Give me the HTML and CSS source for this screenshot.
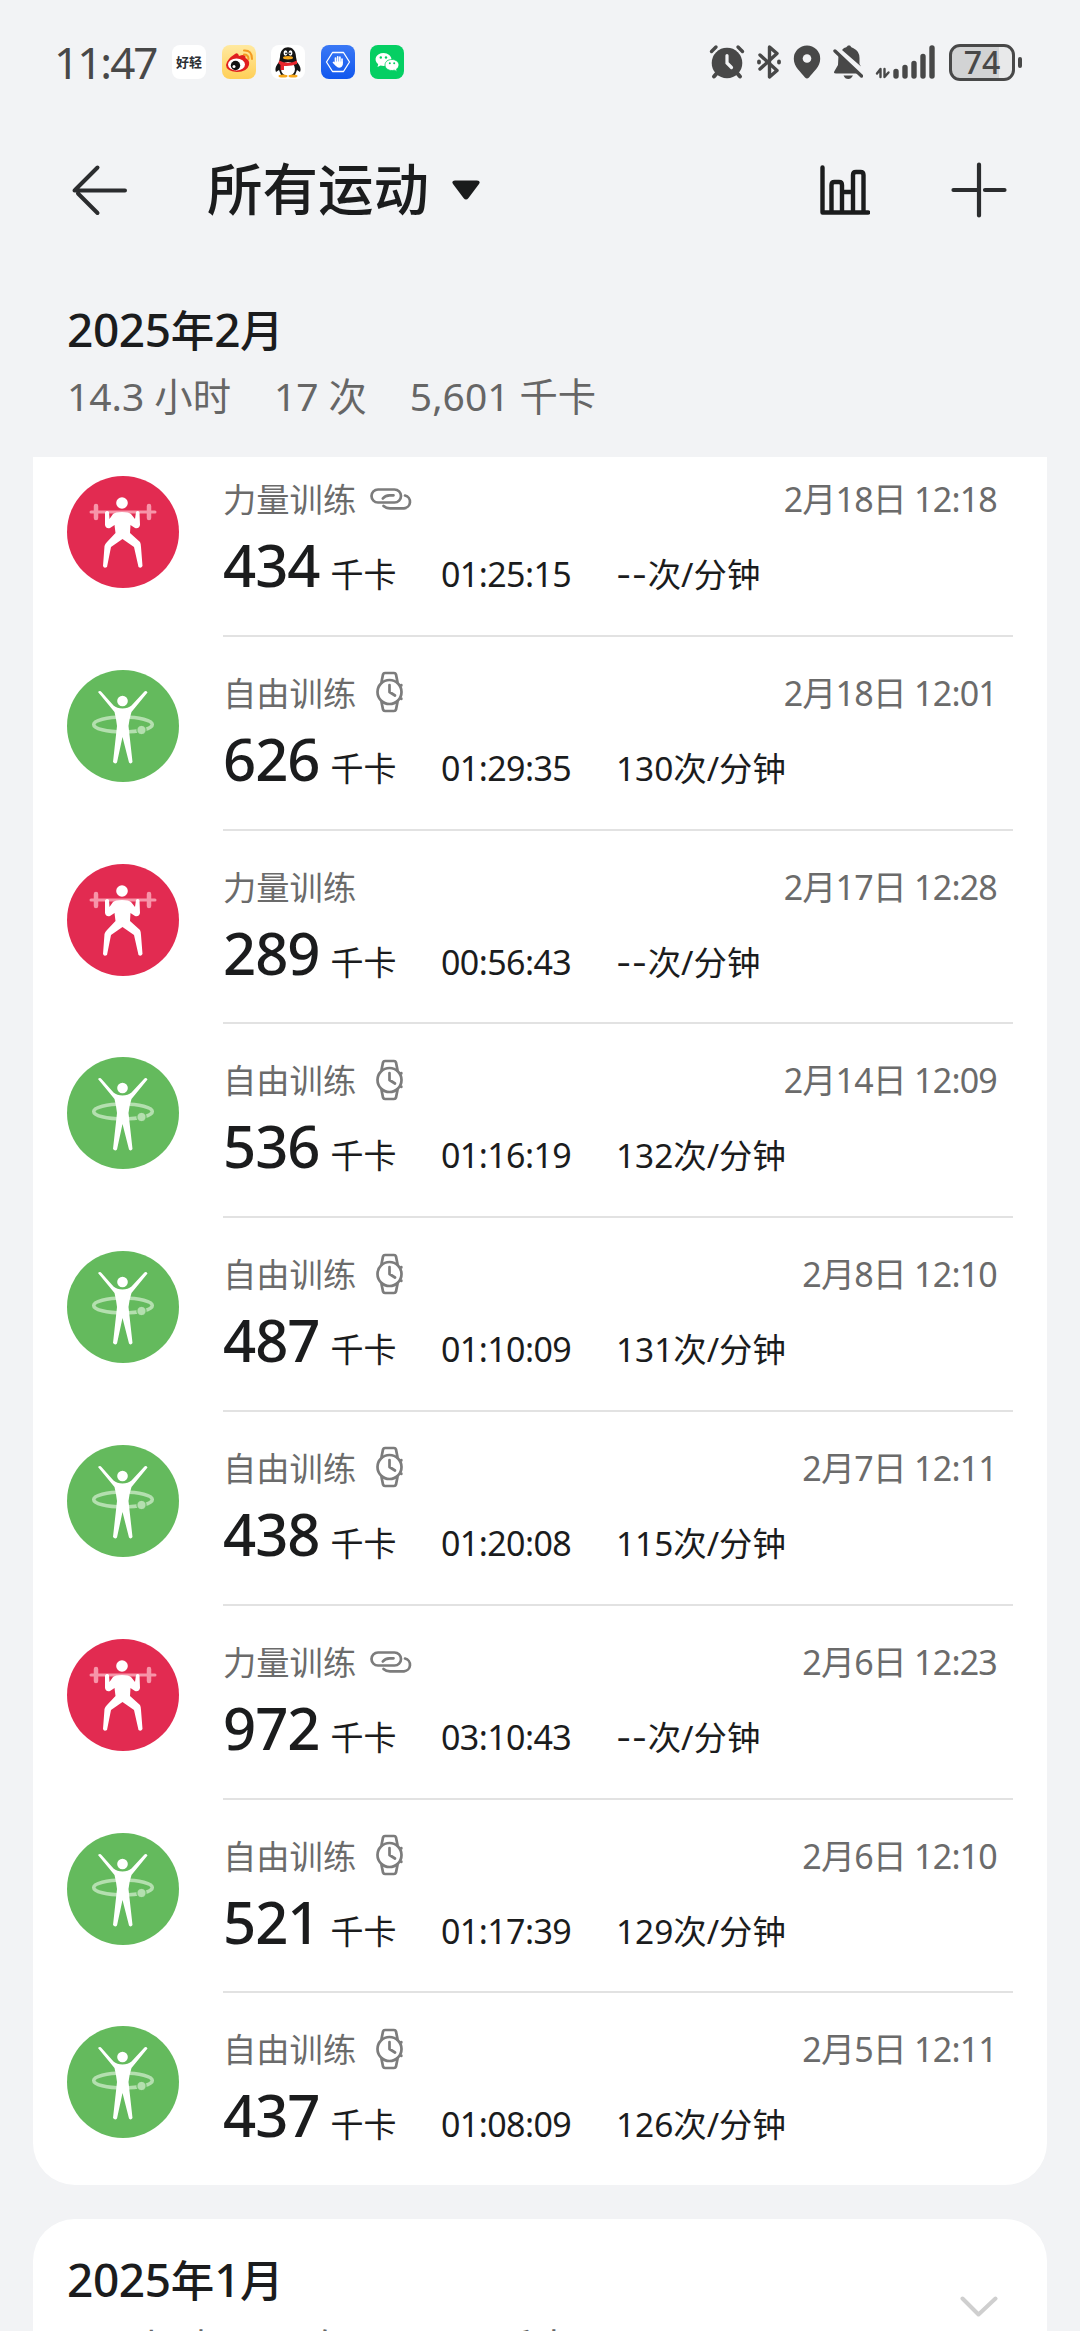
FILE: index.html
```html
<!DOCTYPE html>
<html lang="zh-CN">
<head>
<meta charset="utf-8">
<title>所有运动</title>
<link rel="stylesheet" href="styles.css">
</head>
<body>
<svg class="defs" aria-hidden="true">
  <symbol id="lift" viewBox="0 0 112 112">
    <circle cx="56" cy="56" r="56" fill="#e22b51"/>
    <g stroke="#f795a9" stroke-linecap="round" fill="none">
      <path d="M24 36H88" stroke-width="3"/>
      <path d="M29 30V42M82 30V42" stroke-width="4.5"/>
    </g>
    <circle cx="55" cy="27" r="5.8" fill="#fff"/>
    <path d="M38 36.500Q40 34 42 36L42.500 43L46 38Q48 36 55 36Q62 36 64 38L68 43L69 36Q71 34 72.500 36.500L73 49Q72 53 68 52L63.500 49L63 57L73 66Q74 68 74 71L75.500 90Q74 93 71.500 91L67 71L55.500 63L44 71L40 91Q37 93 36 90L37.500 70Q38 68 40 66L48.500 57L47.500 49L43 52Q39 53 38 49Z" fill="#fff"/>
  </symbol>
  <symbol id="free" viewBox="0 0 112 112">
    <circle cx="56" cy="56" r="56" fill="#64ba5d"/>
    <ellipse cx="56" cy="54.500" rx="29.300" ry="7.500" fill="none" stroke="#b4dfaf" stroke-width="3.600"/>
    <circle cx="74.500" cy="60" r="4.600" fill="#b4dfaf" stroke="#64ba5d" stroke-width="1"/>
    <circle cx="55.500" cy="31" r="5.300" fill="#fff"/>
    <path d="M31 22Q33 20 34.500 22L46.500 35.500Q50 38.500 55.500 38.500Q61 38.500 64.500 35.500L77 22Q79 20 80.500 22.500L64.500 42Q62.500 48 61.500 56L65.500 92Q64 94.500 62 92.500L55.500 67L50 92.500Q48 94.500 46 92L50 56Q49 48 47.500 42Z" fill="#fff"/>
  </symbol>
  <symbol id="link" viewBox="0 0 42 22">
    <g fill="none" stroke="#7c7c7c" stroke-width="2.700" stroke-linecap="round">
      <rect x="1.500" y="1.500" width="29.500" height="13" rx="6.500"/>
      <path d="M23.500 7.300H19.500Q15 7.500 12.800 10.500M13.500 18Q16 20.300 20 20.300H34A6.500 6.500 0 0 0 35 7.500"/>
    </g>
  </symbol>
  <symbol id="watch" viewBox="0 0 28 42">
    <g fill="none" stroke="#7c7c7c" stroke-width="2.700" stroke-linecap="round" stroke-linejoin="round">
      <circle cx="13.500" cy="21" r="12"/>
      <path d="M5.500 11L7 3.500Q7.500 2 9 2H18Q19.500 2 20 3.500L21.500 11M5.500 31L7 38.500Q7.500 40 9 40H18Q19.500 40 20 38.500L21.500 31M13.500 14V21L19 24.500M25.300 14V14.500M25.300 27.500V28"/>
    </g>
  </symbol>
</svg>

<div class="status">
  <span class="clock">11:47</span>
  <div class="apps">
    <span class="app haoqing"><i>好轻</i></span>
    <svg class="app" viewBox="0 0 34 34">
      <defs><linearGradient id="wb" x1="0" y1="0" x2="0" y2="1"><stop offset="0" stop-color="#ffe9a0"/><stop offset="1" stop-color="#ffcf57"/></linearGradient></defs>
      <rect width="34" height="34" rx="8" fill="url(#wb)"/>
      <path d="M13 9Q16 7 17 11Q24 8 23.500 13Q28 15 27 20Q25 27 15 27Q4 26 4 20Q5 14 13 9Z" fill="#e01e1e"/>
      <ellipse cx="14.500" cy="19.500" rx="8.500" ry="6" fill="#fff"/>
      <circle cx="13.500" cy="20.500" r="4.700" fill="#111"/><circle cx="12" cy="21.500" r="1.500" fill="#fff"/>
      <path d="M22 5.500Q30 5 30 14M22 9.500Q26.500 9.500 26.500 14" fill="none" stroke="#f39a22" stroke-width="2" stroke-linecap="round"/>
    </svg>
    <svg class="app" viewBox="0 0 34 34">
      <rect width="34" height="34" rx="8" fill="#fff"/>
      <path d="M9 12C9 -1 25 -1 25 12L26 17Q31 23 29 27L26 25L24 30H10L8 25L5 27Q3 23 8 17Z" fill="#151515"/>
      <ellipse cx="17" cy="24" rx="7" ry="7" fill="#fff"/>
      <path d="M8 15.500Q17 20 26 15.500V19Q20 21.500 13 21V25H9.500V20L7.500 18.500Z" fill="#e8252c"/>
      <ellipse cx="14.500" cy="8" rx="1.900" ry="2.700" fill="#fff"/><ellipse cx="19.500" cy="8" rx="1.900" ry="2.700" fill="#fff"/>
      <circle cx="15" cy="8.300" r=".9" fill="#111"/><circle cx="19" cy="8.300" r=".9" fill="#111"/>
      <ellipse cx="17" cy="12.800" rx="5" ry="1.700" fill="#f7a81b"/>
      <ellipse cx="12" cy="31" rx="4.500" ry="1.500" fill="#f7a81b"/><ellipse cx="22" cy="31" rx="4.500" ry="1.500" fill="#f7a81b"/>
    </svg>
    <svg class="app" viewBox="0 0 34 34">
      <defs><linearGradient id="bl" x1="0" y1="0" x2="0" y2="1"><stop offset="0" stop-color="#3a78f5"/><stop offset="1" stop-color="#1157ee"/></linearGradient></defs>
      <rect width="34" height="34" rx="8" fill="url(#bl)"/>
      <path d="M11.500 7.500H22.500L28.500 17L22.500 26.500H11.500L5.500 17Z" fill="none" stroke="#fff" stroke-width="1.300" stroke-linejoin="round"/>
      <path d="M14.500 18V13M16.700 17V11.800M18.900 17V12.200M21 18V14M12.500 17.500L15 20" stroke="#fff" stroke-width="1.700" stroke-linecap="round"/>
      <path d="M13.700 16.500H21.800V19.500Q21 22.800 18 22.800Q15.500 22.500 13.700 19Z" fill="#fff"/>
    </svg>
    <svg class="app" viewBox="0 0 34 34">
      <rect width="34" height="34" rx="8" fill="#05cf63"/>
      <path d="M13.500 8C18 8 21.500 11 21.500 14.500S18 21 13.500 21L10.500 20.500L7.500 22L8.200 19.300C3 15 6 8 13.500 8Z" fill="#fff"/>
      <path d="M22 14.500C26 14.500 29 17 29 20Q29 22.500 26.500 24.200L27 26.500L24.300 25.200C19 26.500 15 23.500 15 20S18 14.500 22 14.500Z" fill="#fff" stroke="#05cf63" stroke-width=".8"/>
      <g fill="#05cf63"><circle cx="10.800" cy="12.500" r="1.200"/><circle cx="16" cy="12.500" r="1.200"/><circle cx="19.800" cy="18.300" r="1"/><circle cx="24.200" cy="18.300" r="1"/></g>
    </svg>
  </div>
  <div class="system">
    <svg width="36" height="36" viewBox="0 0 36 36" fill="none" stroke="#484848" stroke-linecap="round">
      <circle cx="18" cy="19" r="15.300" fill="#484848" stroke="none"/>
      <path d="M2.500 7.500L7 3M33.500 7.500L29 3" stroke-width="3.400"/><path d="M8 29L5 32.500M28 29L31 32.500" stroke-width="4"/>
      <path d="M18 11.500V19L22.500 23.500" stroke="#f2f3f5" stroke-width="3.200"/>
    </svg>
    <svg width="24" height="36" viewBox="0 0 24 36" fill="none" stroke="#484848" stroke-width="3.400" stroke-linejoin="round" stroke-linecap="round">
      <path d="M3 11L20 26.500L12.500 33V3L20 9.500L3 25"/><path d="M2 17.500V18.500M22 17.500V18.500" stroke-width="3.800"/>
    </svg>
    <svg width="28" height="36" viewBox="0 0 28 36"><path d="M14 1.500A13.200 13.200 0 0 0 .8 14.700C.8 23 8 28 12 33.500Q14 35.500 16 33.500C20 28 27.200 23 27.200 14.700A13.200 13.200 0 0 0 14 1.500Z" fill="#484848"/><circle cx="14" cy="14.500" r="4.300" fill="#f2f3f5"/></svg>
    <svg width="30" height="36" viewBox="0 0 30 36">
      <path d="M11 4Q13.500 3.500 15 1.500H17Q18 3.500 20.500 4.200Q26.500 7 26.500 14V20L28 22.500L9 6Z" fill="#484848"/>
      <path d="M5.500 11L25 29.500H3Q0 29.500 1.500 27L5 21Z" fill="#484848"/>
      <path d="M2 7L28.500 32" stroke="#484848" stroke-width="3.400" stroke-linecap="round"/>
      <path d="M10.500 31.500H20Q18 35 15.300 35Q12 35 10.500 31.500Z" fill="#484848"/>
    </svg>
    <svg width="62" height="36" viewBox="0 0 62 36" fill="none" stroke="#484848" stroke-linecap="round">
      <path d="M5.500 33V25L2 29.500M9.500 25V33L13.500 28.500" stroke-width="2.400" stroke-linejoin="round"/>
      <path d="M21 27.500V32M30 23.500V32M39 19.500V32M48 12.500V32M57 4V32" stroke-width="5.400"/>
    </svg>
    <div class="battery"><span>74</span></div>
  </div>
</div>

<header class="bar">
  <svg class="back" width="56" height="52" viewBox="0 0 56 52" fill="none" stroke="#2b2c2e" stroke-width="4" stroke-linecap="round"><path d="M2.500 26.500H53M3 26L25.500 3.500M6 29.500L25.500 49"/></svg>
  <h1>所有运动</h1>
  <svg class="caret" width="28" height="20" viewBox="0 0 28 20"><path d="M3 .5H25Q29 1 27 4L16.500 18Q14 21 11.500 18L1 4Q-1 1 3 .5Z" fill="#1a1b1c"/></svg>
  <svg class="chart" width="50" height="50" viewBox="0 0 50 50" fill="none" stroke="#1b1c1d" stroke-width="4.400" stroke-linecap="round" stroke-linejoin="round"><path d="M2.500 2.500V47.500H48M11.500 47V20Q11.500 17 14.500 17H19Q22 17 22 20V47M22 27H33M33 47V10Q33 7 36 7H40.500Q43.500 7 43.500 10V47"/></svg>
  <svg class="plus" width="56" height="56" viewBox="0 0 56 56" fill="none" stroke="#2b2c2e" stroke-width="4.200" stroke-linecap="round"><path d="M28 2.500V53.500M2.500 28H28M34 28H53.500"/></svg>
</header>

<section class="month">
  <h2><b>2025</b>年<b>2</b>月</h2>
  <p class="stats"><span><b>14.3</b> 小时</span><span><b>17</b> 次</span><span><b>5,601</b> 千卡</span></p>
</section>

<main class="card list">
  <article class="row"><svg class="sport"><use href="#lift"/></svg><div class="body"><div class="top"><span class="name">力量训练</span><svg class="link"><use href="#link"/></svg><time>2月18日 12:18</time></div><div class="data"><span class="kcal"><b>434</b>千卡</span><span class="dur">01:25:15</span><span class="rate"><i>--</i>次/分钟</span></div></div></article>
  <article class="row"><svg class="sport"><use href="#free"/></svg><div class="body"><div class="top"><span class="name">自由训练</span><svg class="watch"><use href="#watch"/></svg><time>2月18日 12:01</time></div><div class="data"><span class="kcal"><b>626</b>千卡</span><span class="dur">01:29:35</span><span class="rate">130次/分钟</span></div></div></article>
  <article class="row"><svg class="sport"><use href="#lift"/></svg><div class="body"><div class="top"><span class="name">力量训练</span><time>2月17日 12:28</time></div><div class="data"><span class="kcal"><b>289</b>千卡</span><span class="dur">00:56:43</span><span class="rate"><i>--</i>次/分钟</span></div></div></article>
  <article class="row"><svg class="sport"><use href="#free"/></svg><div class="body"><div class="top"><span class="name">自由训练</span><svg class="watch"><use href="#watch"/></svg><time>2月14日 12:09</time></div><div class="data"><span class="kcal"><b>536</b>千卡</span><span class="dur">01:16:19</span><span class="rate">132次/分钟</span></div></div></article>
  <article class="row"><svg class="sport"><use href="#free"/></svg><div class="body"><div class="top"><span class="name">自由训练</span><svg class="watch"><use href="#watch"/></svg><time>2月8日 12:10</time></div><div class="data"><span class="kcal"><b>487</b>千卡</span><span class="dur">01:10:09</span><span class="rate">131次/分钟</span></div></div></article>
  <article class="row"><svg class="sport"><use href="#free"/></svg><div class="body"><div class="top"><span class="name">自由训练</span><svg class="watch"><use href="#watch"/></svg><time>2月7日 12:11</time></div><div class="data"><span class="kcal"><b>438</b>千卡</span><span class="dur">01:20:08</span><span class="rate">115次/分钟</span></div></div></article>
  <article class="row"><svg class="sport"><use href="#lift"/></svg><div class="body"><div class="top"><span class="name">力量训练</span><svg class="link"><use href="#link"/></svg><time>2月6日 12:23</time></div><div class="data"><span class="kcal"><b>972</b>千卡</span><span class="dur">03:10:43</span><span class="rate"><i>--</i>次/分钟</span></div></div></article>
  <article class="row"><svg class="sport"><use href="#free"/></svg><div class="body"><div class="top"><span class="name">自由训练</span><svg class="watch"><use href="#watch"/></svg><time>2月6日 12:10</time></div><div class="data"><span class="kcal"><b>521</b>千卡</span><span class="dur">01:17:39</span><span class="rate">129次/分钟</span></div></div></article>
  <article class="row"><svg class="sport"><use href="#free"/></svg><div class="body"><div class="top"><span class="name">自由训练</span><svg class="watch"><use href="#watch"/></svg><time>2月5日 12:11</time></div><div class="data"><span class="kcal"><b>437</b>千卡</span><span class="dur">01:08:09</span><span class="rate">126次/分钟</span></div></div></article>
</main>

<section class="card next">
  <div>
    <h2><b>2025</b>年<b>1</b>月</h2>
    <p class="stats"><span><b>9.3</b> 小时</span><span><b>12</b> 次</span><span><b>3,601</b> 千卡</span></p>
  </div>
  <svg class="chevron" width="38" height="22" viewBox="0 0 38 22" fill="none" stroke="#cfcfcf" stroke-width="4" stroke-linecap="round" stroke-linejoin="round"><path d="M2.500 2.500L18.500 18.500L35.500 2.500"/></svg>
</section>
</body>
</html>
```
FILE: styles.css
```css
* { box-sizing: border-box; }
html, body { height: 2331px; overflow: hidden; }
body {
  margin: 0;
  width: 1080px;
  display: flex;
  flex-direction: column;
  background: #f2f3f5;
  color: #1b1c1d;
  font-family: "Noto Sans", "Noto Sans CJK SC", sans-serif;
  white-space: nowrap;
}
h1, h2, p { margin: 0; }
i { font-style: normal; }
svg { display: block; flex: none; }
.defs { position: absolute; width: 0; height: 0; }

.status {
  height: 124px;
  padding: 0 56px 0 54px;
  display: flex;
  align-items: center;
}
.clock {
  width: 118px;
  font-size: 44px;
  line-height: 60px;
  letter-spacing: -2px;
  color: #484848;
}
.apps { display: flex; gap: 15.500px; }
.app { width: 34px; height: 34px; }
.haoqing {
  border-radius: 8px;
  background: #fff;
  display: flex;
  align-items: center;
  justify-content: center;
}
.haoqing i {
  font-size: 13px;
  line-height: 34px;
  font-weight: 700;
  font-family: "Noto Sans CJK SC", sans-serif;
  color: #2c3034;
}
.system { margin-left: auto; display: flex; align-items: center; gap: 12px; }
.battery {
  position: relative;
  width: 66px;
  height: 37px;
  margin-right: 9px;
  border: 3px solid #484848;
  border-radius: 11px;
  background: linear-gradient(90deg, #d2d3d4 78%, #e8e9ea 78%);
  color: #484848;
  text-align: center;
}
.battery span { display: block; font-size: 32px; line-height: 30px; font-weight: 500; }
.battery::after {
  content: "";
  position: absolute;
  right: -10px;
  top: 10px;
  width: 4px;
  height: 11px;
  border-radius: 2px;
  background: #484848;
}

.bar {
  height: 132px;
  padding: 0 73px 0 72px;
  display: flex;
  align-items: center;
}
.bar h1 {
  margin: -3px 0 0 79px;
  font-size: 55.500px;
  line-height: 72px;
  font-weight: 500;
}
.caret { margin-left: 23px; }
.chart { margin-left: auto; }
.plus { margin-left: 81px; }

.month { height: 201px; padding: 43px 67px 0; }
h2 { font-size: 43.500px; line-height: 60px; font-weight: 500; }
h2 b { font-size: 46px; font-weight: 500; letter-spacing: -.4px; }
.stats {
  margin-top: 5px;
  display: flex;
  gap: 43px;
  font-size: 38.300px;
  line-height: 62px;
  color: #666;
}
.stats b { font-size: 39px; font-weight: 400; }

.card { width: 1014px; margin-left: 33px; background: #fff; overflow: hidden; flex: none; }
.list { height: 1728px; border-radius: 0 0 42px 42px; }
.row { height: 193.800px; padding-left: 34px; display: flex; gap: 44px; }
.row:first-child { margin-top: -14px; }
.sport { width: 112px; height: 112px; margin-top: 33px; }
.body { width: 790px; padding-top: 32px; border-bottom: 2px solid #e2e2e2; }
.row:last-child .body { border: 0; }
.top {
  height: 48px;
  padding-right: 16px;
  display: flex;
  align-items: center;
  font-size: 33.300px;
  line-height: 48px;
  color: #6b6b6b;
}
.link { width: 42px; height: 22px; margin-left: 14px; }
.watch { width: 28px; height: 42px; margin: -1px 0 0 20px; }
time { margin-left: auto; font-size: 34px; letter-spacing: -.8px; }
.data {
  margin-top: 12px;
  display: grid;
  grid-template-columns: 218px 175px auto;
  align-items: baseline;
  font-size: 34px;
  line-height: 60px;
}
.kcal { font-size: 33px; }
.kcal b { margin-right: 11px; font-size: 58px; font-weight: 500; letter-spacing: -1px; }
.dur { letter-spacing: -.6px; }
.rate { font-size: 33.400px; }
.rate i { font-family: Inter, sans-serif; letter-spacing: .5px; }

.next {
  height: 112px;
  margin-top: 34px;
  padding: 30px 49px 0 34px;
  border-radius: 42px 42px 0 0;
  display: flex;
  justify-content: space-between;
}
.next .stats { margin-top: 6px; }
.chevron { margin-top: 47px; }
```
